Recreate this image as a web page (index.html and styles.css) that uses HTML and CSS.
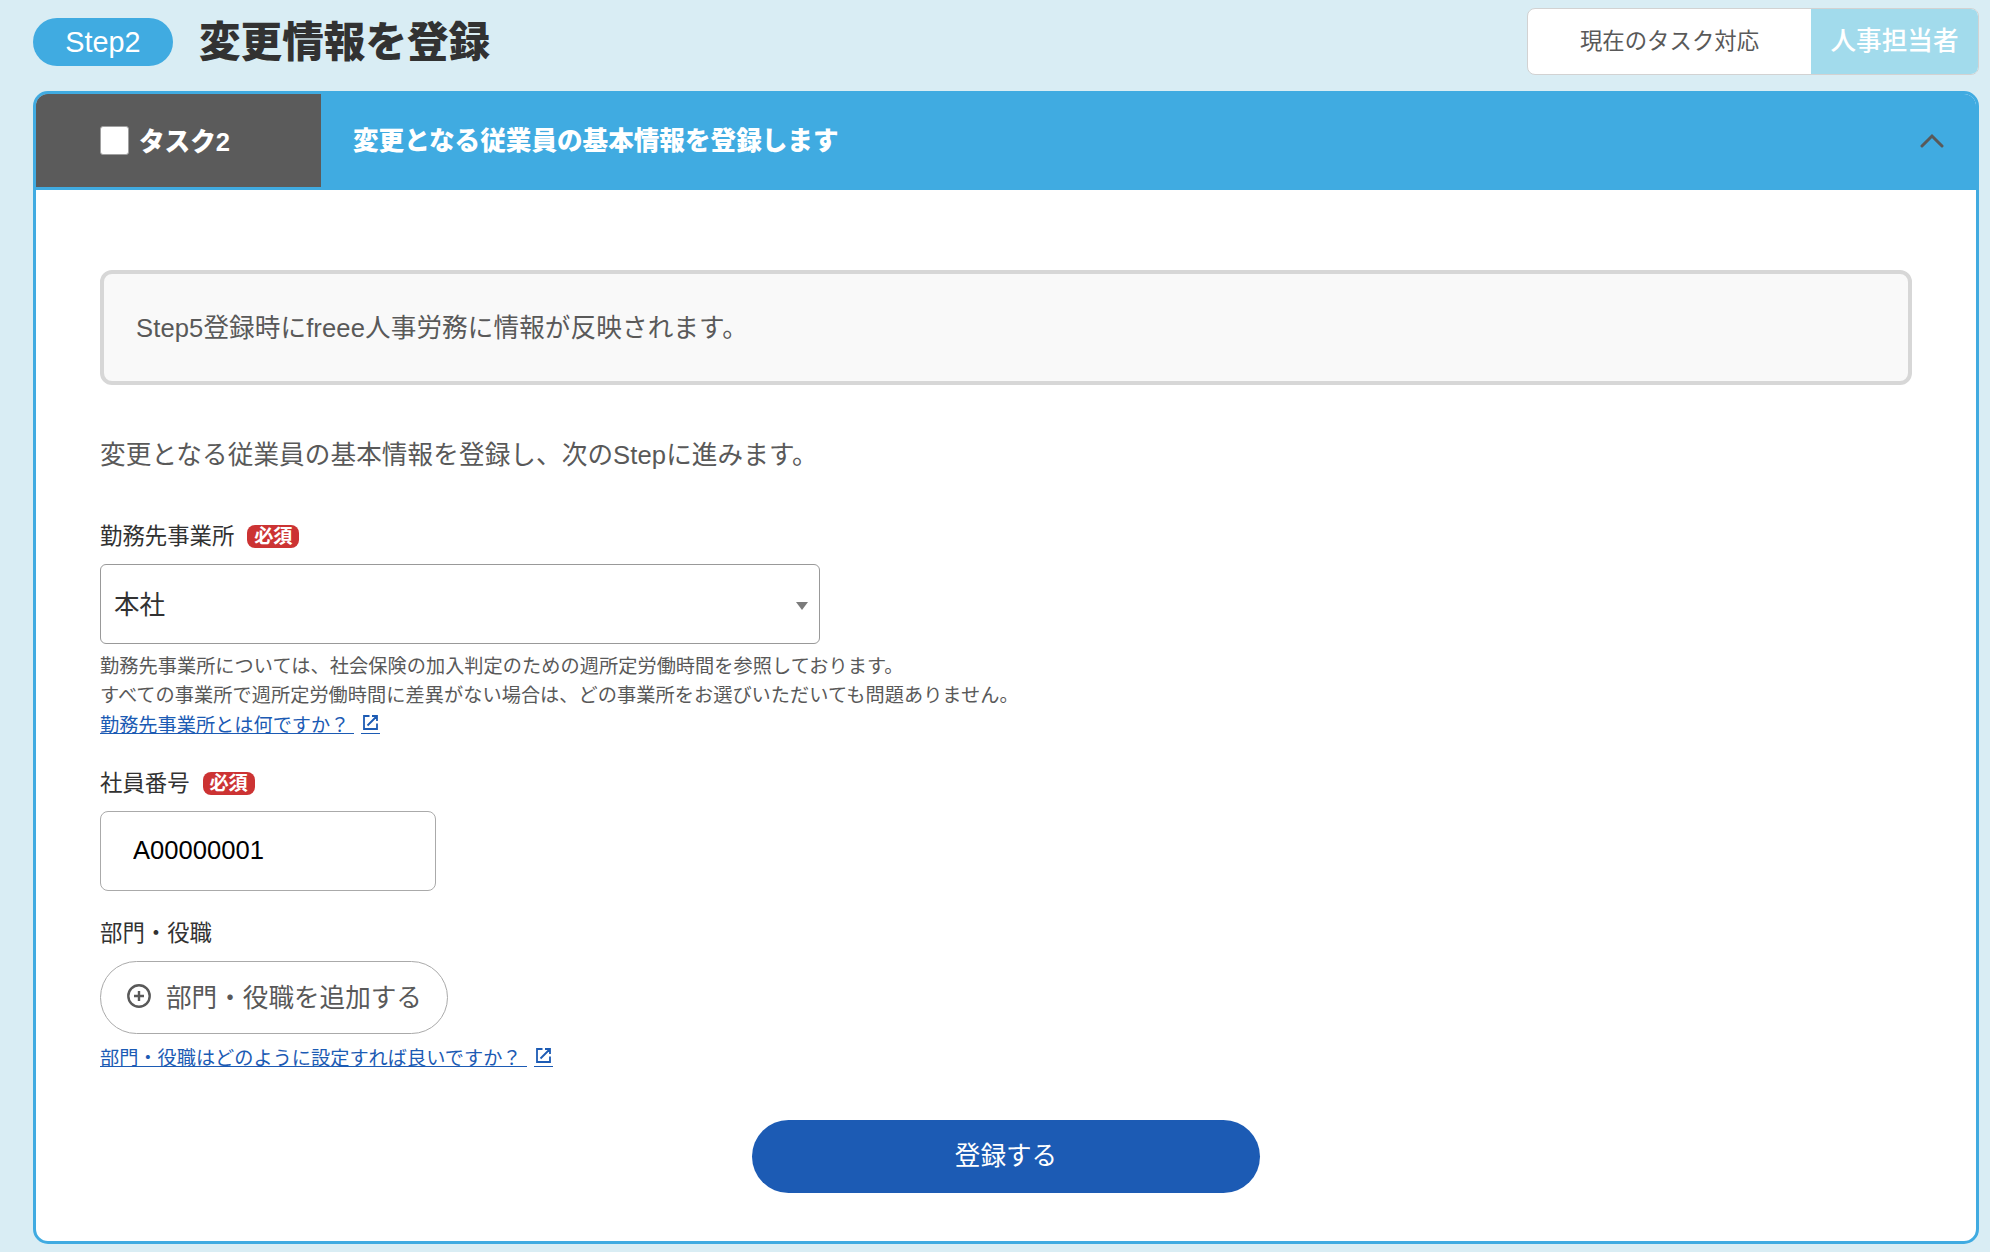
FILE: index.html
```html
<!doctype html>
<html lang="ja">
<head>
<meta charset="utf-8">
<title>変更情報を登録</title>
<link rel="stylesheet" href="styles.css">
</head>

<body>
	<div class="step-head">
		<span class="step-label">Step2</span>
		<h1>変更情報を登録</h1>
		<div class="assignee">
			<span class="assignee-title">現在のタスク対応</span>
			<span class="assignee-name">人事担当者</span>
		</div>
	</div>

	<div class="task">
		<div class="task-head">
			<label class="task-no"><input type="checkbox">タスク2</label>
			<h2>変更となる従業員の基本情報を登録します</h2>
			<svg class="arrow" width="24" height="16" viewBox="0 0 24 16"><path d="M2 13L12 3l10 10" /></svg>
		</div>
		<div class="task-body">
			<div class="notice">Step5登録時にfreee人事労務に情報が反映されます。</div>
			<p class="lead">変更となる従業員の基本情報を登録し、次のStepに進みます。</p>

			<div class="label">勤務先事業所<span class="required">必須</span></div>
			<div class="select">本社</div>
			<p class="help">勤務先事業所については、社会保険の加入判定のための週所定労働時間を参照しております。<br>すべての事業所で週所定労働時間に差異がない場合は、どの事業所をお選びいただいても問題ありません。</p>
			<a class="link" href="javascript:;"><span>勤務先事業所とは何ですか？</span><i><svg width="15" height="15" viewBox="0 0 15 15"><path d="M6.500 1H1v13h13V8.500M9 1h5v5M14 1L4.500 10.500" /></svg></i></a>

			<div class="label label-no">社員番号<span class="required">必須</span></div>
			<input type="text" class="text" value="A00000001">

			<div class="label label-dept">部門・役職</div>
			<button class="add" type="button">
				<svg width="24" height="24" viewBox="0 0 24 24"><circle cx="12" cy="12" r="10.700" /><path d="M12 7v10M7 12h10" /></svg>部門・役職を追加する
			</button>
			<a class="link link-dept" href="javascript:;"><span>部門・役職はどのように設定すれば良いですか？</span><i><svg width="15" height="15" viewBox="0 0 15 15"><path d="M6.500 1H1v13h13V8.500M9 1h5v5M14 1L4.500 10.500" /></svg></i></a>

			<button class="submit" type="button">登録する</button>
		</div>
	</div>
</body>
</html>
```

FILE: styles.css
```css
*{
	margin: 0;
	padding: 0;
	box-sizing: border-box;
}
body{
	background: #d9edf4;
	padding: 8px 11px 8px 33px;
	font-family: "Liberation Sans", "Noto Sans CJK JP", sans-serif;
	font-size: 25.6px;
	color: #595959;
}
button,input{
	font-family: inherit;
	font-size: inherit;
}
svg{
	fill: none;
	stroke: currentColor;
}
.step-head{
	display: flex;
	height: 83px;
	align-items: flex-start;
}
.step-label{
	width: 140px;
	height: 48px;
	margin-top: 10px;
	border-radius: 24px;
	background: #40abe1;
	color: #fff;
	font-size: 28.8px;
	line-height: 48px;
	text-align: center;
}
h1{
	margin-left: 26px;
	font-size: 41.6px;
	font-weight: 900;
	line-height: 69px;
	color: #323232;
}
.assignee{
	display: flex;
	width: 452px;
	height: 67px;
	margin-left: auto;
	border: 1px solid #d2d2d2;
	border-radius: 8px;
	overflow: hidden;
	background: #fff;
	line-height: 65px;
	text-align: center;
}
.assignee-title{
	flex: 1;
	font-size: 22.4px;
}
.assignee-name{
	width: 167px;
	background: #a2dbec;
	color: #fff;
	font-weight: 500;
}
.task{
	height: 1153px;
	border: 3px solid #40abe1;
	border-radius: 15px;
	overflow: hidden;
	background: #fff;
}
.task-head{
	display: flex;
	align-items: center;
	height: 96px;
	border-bottom: 3px solid #40abe1;
	background: #40abe1;
	color: #fff;
}
.task-no{
	display: flex;
	align-items: center;
	width: 285px;
	height: 93px;
	padding-left: 64px;
	padding-bottom: 3px;
	background: #5b5b5b;
	font-weight: 900;
}
.task-no input{
	appearance: none;
	width: 29px;
	height: 29px;
	margin-top: 3px;
	margin-right: 10px;
	border: 1px solid #a0a0a0;
	border-radius: 3px;
	background: #fff;
}
h2{
	margin-left: 32px;
	padding-bottom: 4px;
	font-size: 25.6px;
	font-weight: 900;
}
.arrow{
	margin-left: auto;
	margin-right: 32px;
	stroke: #595959;
	stroke-width: 3;
	stroke-linecap: round;
}
.task-body{
	padding: 80px 64px 0;
}
.notice{
	height: 115px;
	padding-left: 32px;
	border: 4px solid #d7d7d7;
	border-radius: 12px;
	background: #f9f9f9;
	line-height: 109px;
	letter-spacing: .1px;
}
.lead{
	margin-top: 50px;
	line-height: 40px;
	letter-spacing: .1px;
}
.label{
	display: flex;
	height: 30px;
	margin-top: 46px;
	font-size: 22.4px;
	line-height: 31px;
	color: #323232;
}
.required{
	width: 52px;
	height: 23px;
	margin-top: 4px;
	margin-left: 13px;
	border-radius: 8px;
	background: #cc3333;
	color: #fff;
	font-size: 19.2px;
	font-weight: bold;
	line-height: 24px;
	text-align: center;
}
.select{
	display: flex;
	align-items: center;
	justify-content: space-between;
	width: 720px;
	height: 80px;
	margin-top: 13px;
	padding: 0 11px 3px 13px;
	border: 1px solid #999;
	border-radius: 6px;
	color: #323232;
}
.select:after{
	content: "";
	margin-top: 7px;
	border: 6px solid transparent;
	border-top: 8px solid #7b7b7b;
	border-bottom: 0;
}
.help{
	margin-top: 8px;
	font-size: 19.2px;
	line-height: 29px;
	letter-spacing: .04px;
}
.link{
	display: flex;
	width: max-content;
	margin-top: 2px;
	font-size: 19.2px;
	line-height: 27px;
	color: #1c5bb4;
	text-decoration: none;
}
.link span{
	height: 22px;
	padding-right: 5px;
	border-bottom: 1px solid;
}
.link i{
	display: flex;
	width: 19px;
	height: 22px;
	margin-left: 7px;
	padding: 3px 0 0 2px;
	border-bottom: 1px solid;
}
.link svg{
	stroke-width: 1.8;
}
.label-no{
	margin-top: 34px;
}
.text{
	display: block;
	width: 336px;
	height: 80px;
	margin-top: 13px;
	padding: 0 32px 1px;
	border: 1px solid #aaa;
	border-radius: 8px;
	color: #000;
}
.label-dept{
	margin-top: 27px;
}
.add{
	display: flex;
	align-items: center;
	width: 348px;
	height: 73px;
	margin-top: 13px;
	padding-left: 26px;
	padding-bottom: 4px;
	border: 1px solid #aaa;
	border-radius: 37px;
	background: #fff;
	color: #595959;
}
.add svg{
	margin-right: 15px;
	stroke-width: 2.4;
}
.link-dept{
	margin-top: 11px;
}
.submit{
	display: block;
	width: 508px;
	height: 73px;
	margin: 53px auto 0;
	padding-bottom: 6px;
	border: 0;
	border-radius: 37px;
	background: #1c5bb4;
	color: #fff;
}
```
